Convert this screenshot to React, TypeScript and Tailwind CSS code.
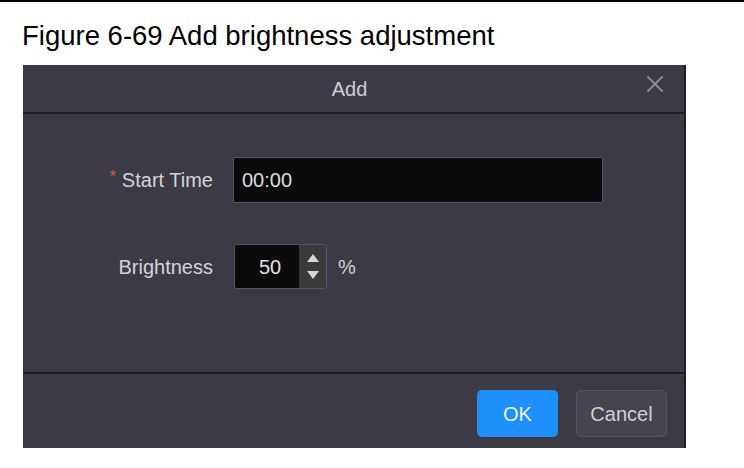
export default function App() {
  return (
    <div className="w-[744px] h-[468px] bg-white overflow-hidden font-['Liberation_Sans',Arial,sans-serif]">
      <div className="h-[2px] bg-black" />
      <h1 className="pl-[22px] pt-[18px] h-[63px] text-[27.5px] leading-[31px] text-black">
        Figure 6-69 Add brightness adjustment
      </h1>

      {/* Dialog */}
      <div className="ml-[23px] w-[663px] h-[383px] bg-[#3c3b45] border-r-2 border-[#1c1c22] flex flex-col">
        {/* Header */}
        <div className="relative h-[49px] flex items-center justify-center border-b-2 border-[#1d1d23]">
          <span className="text-[20px] text-[#cfcfd2] -translate-x-[4px]">Add</span>
          <svg
            className="absolute right-[20px] top-[10px]"
            width="18"
            height="18"
            viewBox="0 0 18 18"
            fill="none"
            stroke="#8a8a92"
            strokeWidth="2"
          >
            <path d="M1.5 1.5l15 15M16.5 1.5l-15 15" />
          </svg>
        </div>

        {/* Body */}
        <div className="flex-1 pt-[43px] flex flex-col gap-[41px]">
          <div className="flex items-center">
            <div className="w-[190px] text-right text-[20px] text-[#d4d4d8]">
              <span className="text-[#e05555] text-[16px] mr-[6px] align-top">*</span>
              Start Time
            </div>
            <div className="ml-[20px] w-[370px] h-[46px] bg-[#0b0b0c] border border-[#5a5960] rounded-[2px] flex items-center pl-[8px] text-[20px] text-[#dcdcdc]">
              00:00
            </div>
          </div>

          <div className="flex items-center">
            <div className="w-[190px] text-right text-[20px] text-[#d4d4d8]">Brightness</div>
            <div className="ml-[21px] w-[93px] h-[45px] border border-[#55545c] rounded-[3px] flex overflow-hidden">
              <div className="flex-1 bg-[#0b0b0c] flex items-center justify-center pl-[6px] text-[20px] text-[#e2e2e2]">
                50
              </div>
              <div className="w-[27px] bg-[#3a3a3d] flex flex-col items-center justify-center gap-[9px]">
                <svg width="12" height="8" viewBox="0 0 12 8">
                  <path d="M6 0L12 8H0z" fill="#d6d6d8" />
                </svg>
                <svg width="12" height="8" viewBox="0 0 12 8">
                  <path d="M0 0H12L6 8z" fill="#d6d6d8" />
                </svg>
              </div>
            </div>
            <span className="ml-[11px] text-[20px] text-[#d4d4d8]">%</span>
          </div>
        </div>

        {/* Footer */}
        <div className="h-[76px] border-t-2 border-[#1d1d23] flex justify-end items-start pt-[16px] pr-[17px] gap-[18px]">
          <button className="w-[81px] h-[47px] rounded-[5px] bg-[#1f8ffb] text-[20px] text-[#eef4ff]">
            OK
          </button>
          <button className="w-[91px] h-[47px] rounded-[5px] bg-[#46454f] border border-[#56555f] text-[20px] text-[#d0d0d4]">
            Cancel
          </button>
        </div>
      </div>
    </div>
  );
}
